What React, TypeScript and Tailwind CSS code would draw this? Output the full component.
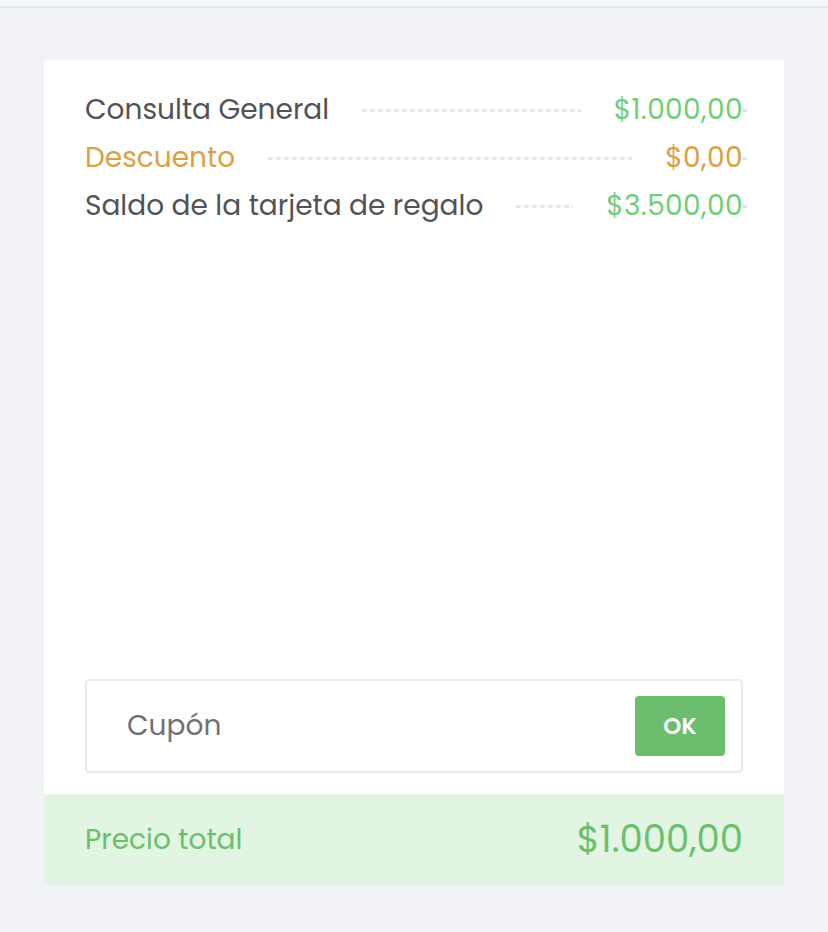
const rows = [
  { label: "Consulta General", amount: "$1.000,00", tone: "default" },
  { label: "Descuento", amount: "$0,00", tone: "discount" },
  { label: "Saldo de la tarjeta de regalo", amount: "$3.500,00", tone: "default" },
];

function Leader({ className = "" }: { className?: string }) {
  return (
    <div
      className={
        "h-[3px] bg-[linear-gradient(to_right,#dde8f1_5px,transparent_5px)] bg-[length:8px_3px] bg-repeat-x " +
        className
      }
    />
  );
}

export default function App() {
  return (
    <div
      className="min-h-[932px] bg-[#f2f3f7] text-[#525257]"
      style={{ fontFamily: "Poppins, 'Open Sans', sans-serif" }}
    >
      <div className="h-[8px] bg-[#f4f6fa] border-b-2 border-[#e1e7ef]" />

      <div className="px-[44px] pt-[52px]">
        <div className="h-[825px] bg-white rounded-t-[4px] flex flex-col">
          <div className="px-[41px] pt-[26px]">
            {rows.map((row) => {
              const color = row.tone === "discount" ? "text-[#dba141]" : "";
              const amountColor =
                row.tone === "discount" ? "text-[#dba141]" : "text-[#6fcf76]";
              return (
                <div key={row.label} className="h-[48px] flex items-center">
                  <span className={"text-[28px] leading-none " + color}>
                    {row.label}
                  </span>
                  <Leader className="flex-1 mx-[33px]" />
                  <span
                    className={
                      "text-[28px] tracking-[0.4px] leading-none " + amountColor
                    }
                  >
                    {row.amount}
                  </span>
                  <Leader className="w-[4px] -mr-[4px]" />
                </div>
              );
            })}
          </div>

          <div className="mt-auto px-[41px] mb-[21px]">
            <div className="h-[94px] border-2 border-[#e7eaf2] rounded-[4px] flex items-center justify-between pl-[40px] pr-[16px]">
              <span className="text-[28px] text-[#707072]">Cupón</span>
              <button className="w-[90px] h-[60px] bg-[#6dbd6e] rounded-[4px] text-white text-[23px] font-semibold">
                OK
              </button>
            </div>
          </div>

          <div className="h-[91px] bg-[#e2f5e3] px-[41px] flex items-center justify-between text-[#6bbf6d]">
            <span className="text-[28px]">Precio total</span>
            <span className="text-[37px]">$1.000,00</span>
          </div>
        </div>
      </div>
    </div>
  );
}
